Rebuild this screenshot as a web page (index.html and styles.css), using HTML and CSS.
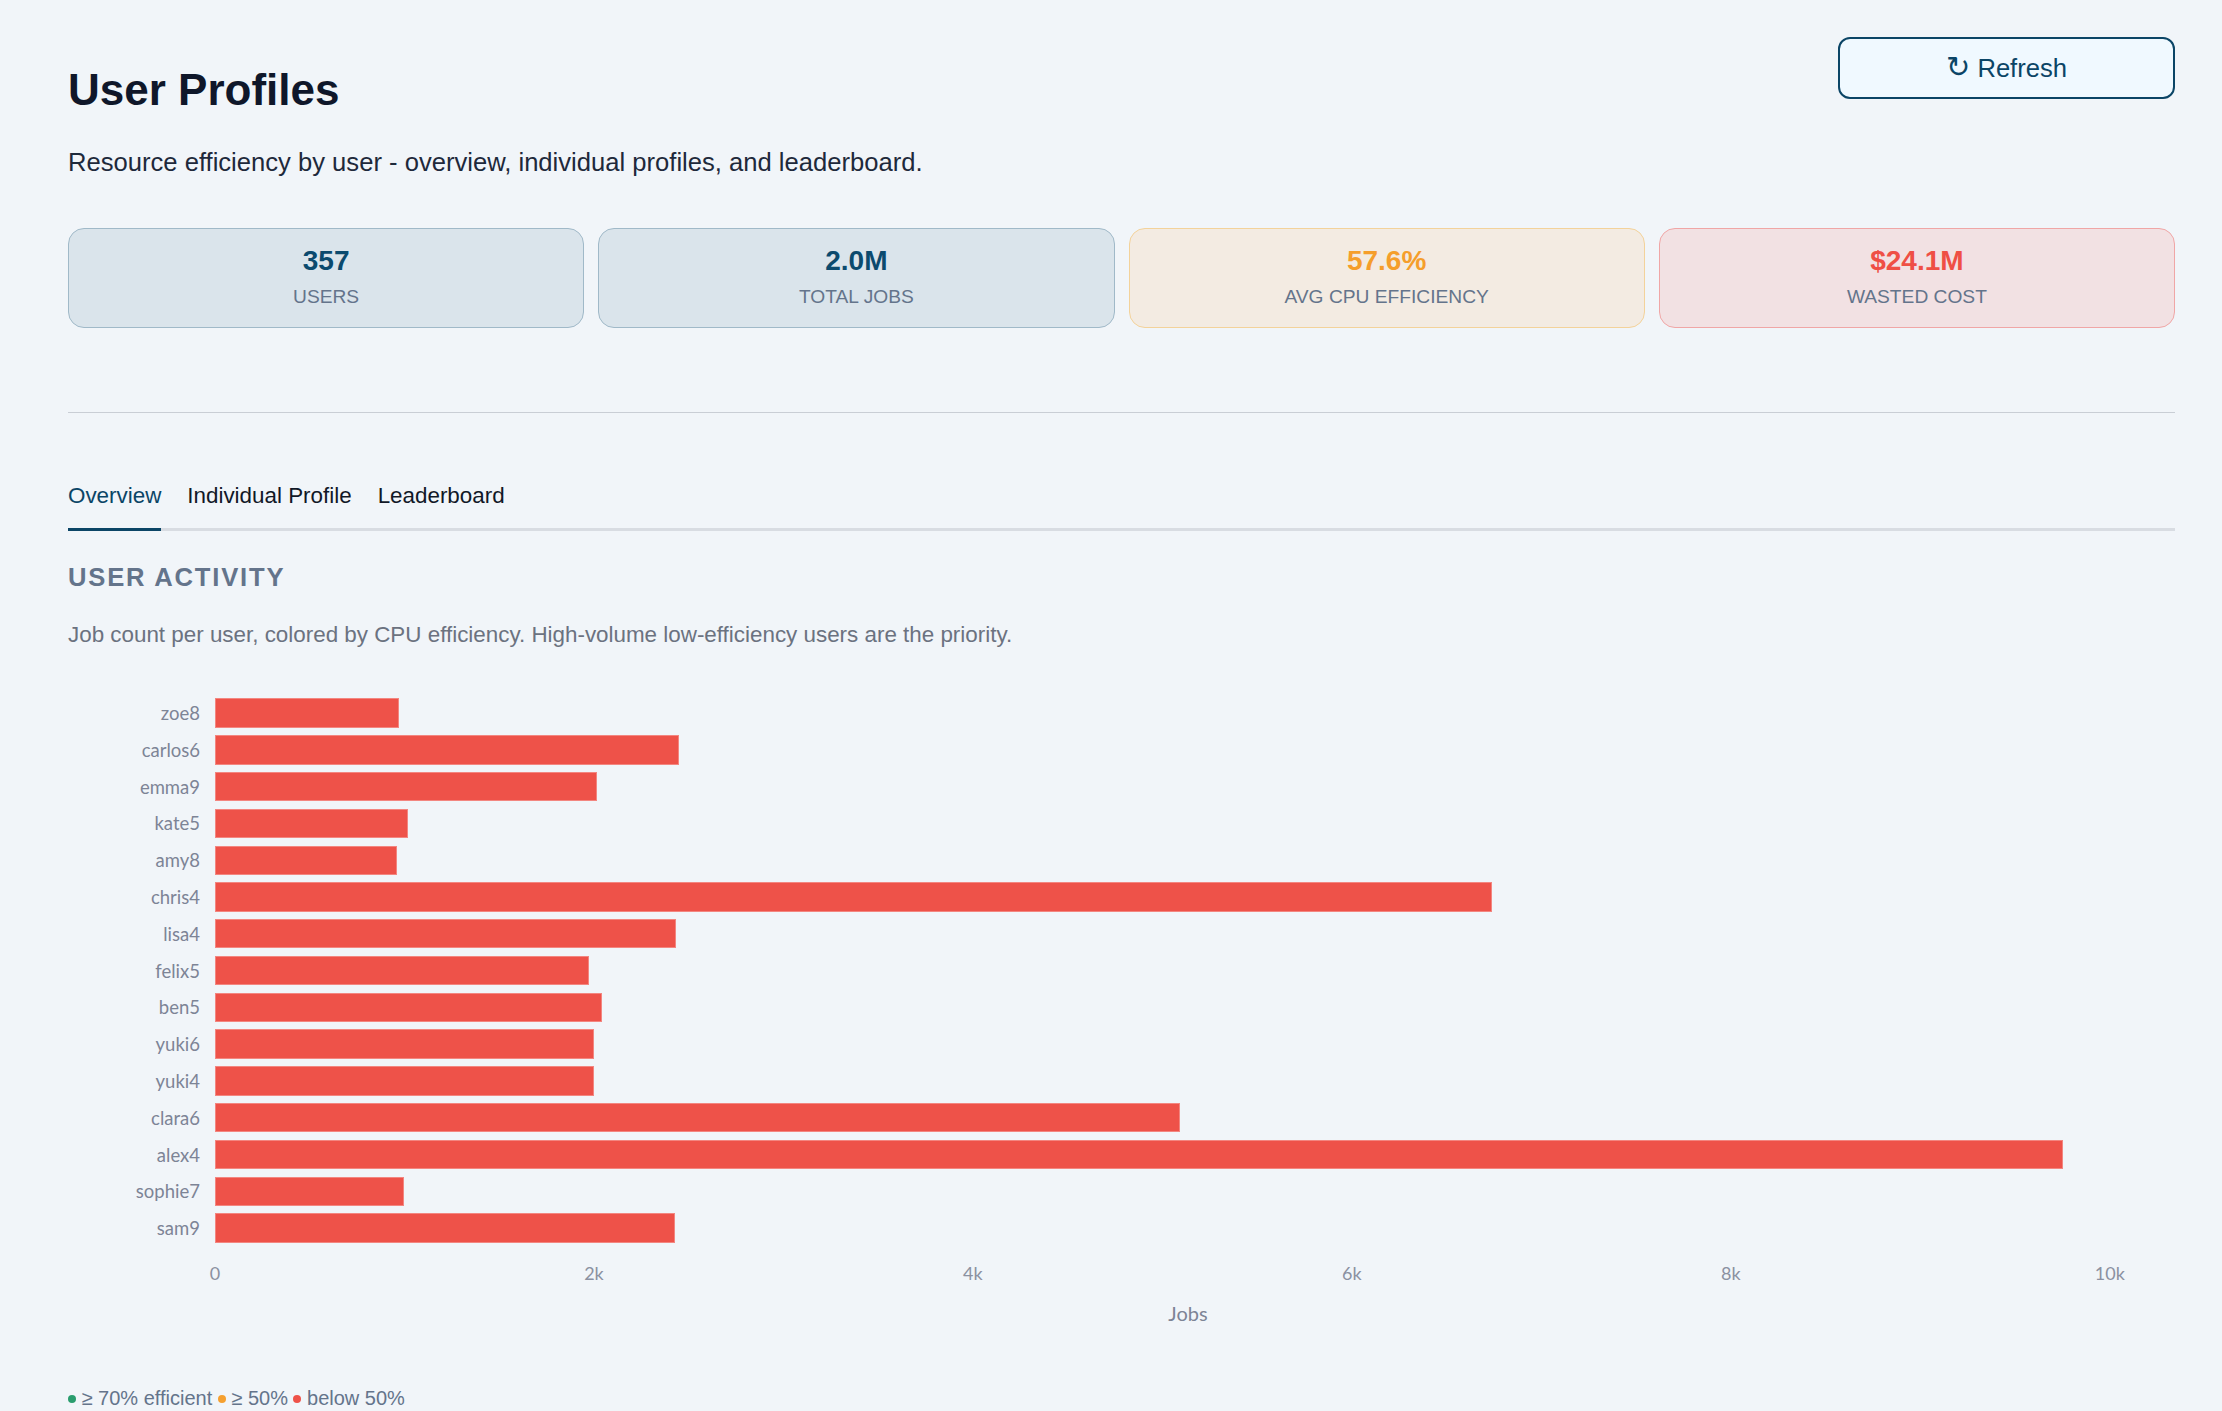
FILE: index.html
```html
<!DOCTYPE html>
<html lang="en">
<head>
    <meta charset="UTF-8">
    <meta name="viewport" content="width=device-width, initial-scale=1.0">
    <title>User Profiles</title>
    <link rel="stylesheet" href="styles.css">
</head>
<body>
    <div class="page">
        <div class="page-header">
            <h1>User Profiles</h1>
            <button type="button" class="refresh-btn"><span class="refresh-icon">↻</span> Refresh</button>
        </div>
        <p class="subtitle">Resource efficiency by user - overview, individual profiles, and leaderboard.</p>

        <div class="stats">
            <div class="stat stat-blue">
                <div class="stat-value">357</div>
                <div class="stat-label">Users</div>
            </div>
            <div class="stat stat-blue">
                <div class="stat-value">2.0M</div>
                <div class="stat-label">Total Jobs</div>
            </div>
            <div class="stat stat-amber">
                <div class="stat-value">57.6%</div>
                <div class="stat-label">Avg CPU Efficiency</div>
            </div>
            <div class="stat stat-red">
                <div class="stat-value">$24.1M</div>
                <div class="stat-label">Wasted Cost</div>
            </div>
        </div>

        <hr class="divider">

        <div class="tabs">
            <div class="tab active">Overview</div>
            <div class="tab">Individual Profile</div>
            <div class="tab">Leaderboard</div>
        </div>

        <h2 class="section-title">User Activity</h2>
        <p class="section-desc">Job count per user, colored by CPU efficiency. High-volume low-efficiency users are the priority.</p>

        <div class="chart">
            <div class="chart-row"><span class="row-label">zoe8</span><div class="track"><div class="bar low" style="width: 9.445%"></div></div></div>
            <div class="chart-row"><span class="row-label">carlos6</span><div class="track"><div class="bar low" style="width: 23.827%"></div></div></div>
            <div class="chart-row"><span class="row-label">emma9</span><div class="track"><div class="bar low" style="width: 19.630%"></div></div></div>
            <div class="chart-row"><span class="row-label">kate5</span><div class="track"><div class="bar low" style="width: 9.922%"></div></div></div>
            <div class="chart-row"><span class="row-label">amy8</span><div class="track"><div class="bar low" style="width: 9.367%"></div></div></div>
            <div class="chart-row"><span class="row-label">chris4</span><div class="track"><div class="bar low" style="width: 65.628%"></div></div></div>
            <div class="chart-row"><span class="row-label">lisa4</span><div class="track"><div class="bar low" style="width: 23.690%"></div></div></div>
            <div class="chart-row"><span class="row-label">felix5</span><div class="track"><div class="bar low" style="width: 19.221%"></div></div></div>
            <div class="chart-row"><span class="row-label">ben5</span><div class="track"><div class="bar low" style="width: 19.912%"></div></div></div>
            <div class="chart-row"><span class="row-label">yuki6</span><div class="track"><div class="bar low" style="width: 19.474%"></div></div></div>
            <div class="chart-row"><span class="row-label">yuki4</span><div class="track"><div class="bar low" style="width: 19.494%"></div></div></div>
            <div class="chart-row"><span class="row-label">clara6</span><div class="track"><div class="bar low" style="width: 49.601%"></div></div></div>
            <div class="chart-row"><span class="row-label">alex4</span><div class="track"><div class="bar low" style="width: 94.985%"></div></div></div>
            <div class="chart-row"><span class="row-label">sophie7</span><div class="track"><div class="bar low" style="width: 9.688%"></div></div></div>
            <div class="chart-row"><span class="row-label">sam9</span><div class="track"><div class="bar low" style="width: 23.642%"></div></div></div>

            <div class="chart-axis">
                <span></span>
                <div class="ticks">
                    <span class="tick"><span>0</span></span>
                    <span class="tick"><span>2k</span></span>
                    <span class="tick"><span>4k</span></span>
                    <span class="tick"><span>6k</span></span>
                    <span class="tick"><span>8k</span></span>
                    <span class="tick"><span>10k</span></span>
                </div>
            </div>
            <div class="chart-axis">
                <span></span>
                <div class="axis-title">Jobs</div>
            </div>
        </div>

        <div class="legend">
            <span class="dot dot-green"></span> ≥ 70% efficient
            <span class="dot dot-amber"></span> ≥ 50%
            <span class="dot dot-red"></span> below 50%
        </div>
    </div>
</body>
</html>
```

FILE: styles.css
```css
body {
    font-family: "Liberation Sans", Arial, sans-serif;
    background-color: #f1f5f9;
    color: #0f172a;
    margin: 0;
}

.page {
    padding: 37px 47px 40px 68px;
}

.page-header {
    display: flex;
    justify-content: space-between;
    align-items: flex-start;
}

h1 {
    font-size: 44px;
    line-height: 52.8px;
    font-weight: 700;
    margin: 26.5px 0 0;
    color: #0f172a;
}

.refresh-btn {
    width: 337px;
    height: 62px;
    background-color: #f0f9ff;
    color: #0b4566;
    border: 2px solid #0b4566;
    border-radius: 12px;
    font-family: "Liberation Sans", Arial, sans-serif;
    font-size: 25.6px;
    line-height: 30px;
    cursor: pointer;
}

.refresh-icon {
    font-family: "DejaVu Sans", sans-serif;
    font-size: 29px;
    line-height: 1;
}

.subtitle {
    font-size: 25.6px;
    line-height: 30.72px;
    margin: 31px 0 0;
    color: #1e293b;
}

.stats {
    display: grid;
    grid-template-columns: repeat(4, 1fr);
    gap: 14px;
    margin-top: 49.5px;
}

.stat {
    border: 1px solid;
    border-radius: 16px;
    padding: 15px 16px 18.5px;
    text-align: center;
}

.stat-value {
    font-size: 28px;
    line-height: 33.6px;
    font-weight: 700;
}

.stat-label {
    font-size: 19.2px;
    line-height: 23px;
    margin-top: 8px;
    text-transform: uppercase;
    color: #64748b;
}

.stat-blue {
    background-color: #dae4eb;
    border-color: #a0b9c8;
}

.stat-blue .stat-value {
    color: #0b4a6e;
}

.stat-amber {
    background-color: #f3ebe2;
    border-color: #f3d29a;
}

.stat-amber .stat-value {
    color: #f59e2b;
}

.stat-red {
    background-color: #f2e1e3;
    border-color: #f0a6a6;
}

.stat-red .stat-value {
    color: #ef4f45;
}

.divider {
    border: none;
    border-top: 1px solid #c9ced5;
    margin: 84.5px 0 0;
}

.tabs {
    display: flex;
    gap: 26px;
    margin-top: 69px;
    border-bottom: 3px solid #d8dce2;
}

.tab {
    font-size: 22.4px;
    line-height: 26.4px;
    padding-top: 1px;
    padding-bottom: 18.5px;
    margin-bottom: -3px;
    color: #111827;
    cursor: pointer;
}

.tab.active {
    color: #0b4566;
    border-bottom: 3px solid #0b4566;
}

.section-title {
    font-size: 25.6px;
    line-height: 30.72px;
    font-weight: 700;
    letter-spacing: 1.8px;
    text-transform: uppercase;
    color: #64748b;
    margin: 31px 0 0;
}

.section-desc {
    font-size: 22.4px;
    line-height: 26.88px;
    color: #6b7280;
    margin: 29px 0 0;
}

.chart {
    margin-top: 46px;
    padding-right: 14px;
    font-family: Lato, "Noto Sans", sans-serif;
}

.chart-row,
.chart-axis {
    display: grid;
    grid-template-columns: 132px 1fr;
    column-gap: 15px;
}

.chart-row {
    height: 36.8px;
    align-items: center;
}

.row-label {
    text-align: right;
    font-size: 18.5px;
    color: #7d8496;
}

.track {
    height: 29.4px;
}

.bar {
    height: 100%;
    box-sizing: border-box;
    border: 1px solid rgba(255, 255, 255, 0.3);
}

.bar.low {
    background-color: #ee5249;
}

.bar.mid {
    background-color: #f5a030;
}

.bar.high {
    background-color: #2a9d6e;
}

.ticks {
    display: flex;
    justify-content: space-between;
    width: 97.37%;
    margin-top: 15.5px;
    font-size: 18px;
    line-height: 22.8px;
    color: #8b91a1;
}

.tick {
    width: 0;
    display: flex;
    justify-content: center;
    white-space: nowrap;
}

.axis-title {
    text-align: center;
    font-size: 20px;
    line-height: 24px;
    margin-top: 16.5px;
    color: #7d8496;
}

.legend {
    margin-top: 61px;
    font-size: 20px;
    line-height: 24px;
    color: #64748b;
}

.dot {
    display: inline-block;
    width: 8px;
    height: 8px;
    border-radius: 50%;
    vertical-align: 2px;
}

.dot-green {
    background-color: #2a9d6e;
}

.dot-amber {
    background-color: #f5a030;
}

.dot-red {
    background-color: #ee5249;
}
```
